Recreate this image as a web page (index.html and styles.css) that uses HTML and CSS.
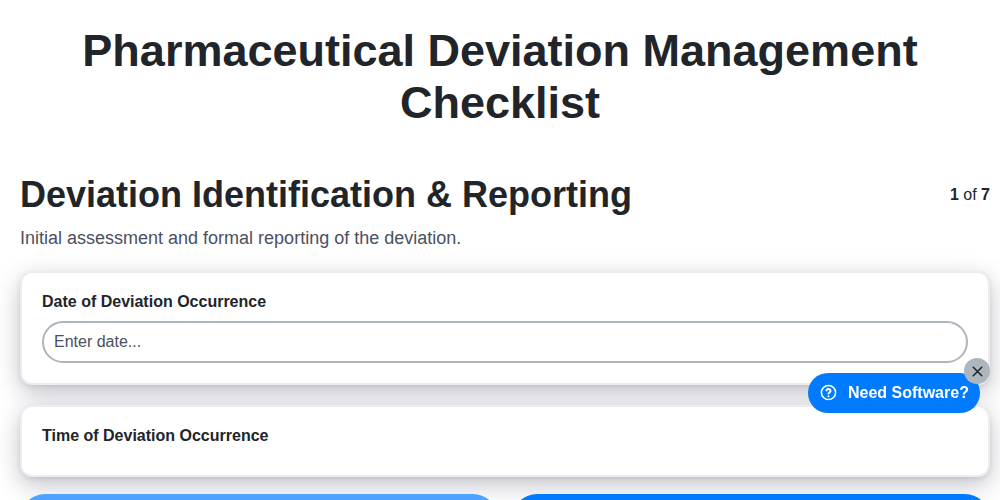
FILE: index.html
```html
<!DOCTYPE html>
<html lang="en">
<head>
<meta charset="utf-8">
<title>Pharmaceutical Deviation Management Checklist</title>
<link rel="stylesheet" href="styles.css">
</head>
<body>
<main class="page">
  <h1 class="title">Pharmaceutical Deviation Management Checklist</h1>
  <header class="section-head">
    <div>
      <h2 class="section-title">Deviation Identification &amp; Reporting</h2>
      <p class="section-sub">Initial assessment and formal reporting of the deviation.</p>
    </div>
    <div class="counter"><strong>1</strong> of <strong>7</strong></div>
  </header>
  <section class="card">
    <label class="label" for="d">Date of Deviation Occurrence</label>
    <input class="field" id="d" type="text" placeholder="Enter date...">
  </section>
  <section class="card card-short">
    <label class="label">Time of Deviation Occurrence</label>
  </section>
  <div class="actions">
    <button class="btn btn-light" aria-label="Previous"></button>
    <button class="btn btn-main" aria-label="Next"></button>
  </div>
</main>
<div class="promo">
  <a class="promo-pill">
    <svg class="promo-icon" viewBox="0 0 24 24" width="17" height="17" fill="none" stroke="#fff" stroke-width="2.2" stroke-linecap="round" stroke-linejoin="round"><circle cx="12" cy="12" r="10"/><path stroke-width="2.8" d="M9.1 9a3 3 0 0 1 5.8 1c0 1.6-2.9 2.4-2.9 3.4"/><path stroke-width="2.8" d="M12 17.2h.01"/></svg>
    <span>Need Software?</span>
  </a>
  <button class="promo-close" aria-label="Close">
    <svg viewBox="0 0 24 24" width="17" height="17" fill="none" stroke="#212529" stroke-width="2.2" stroke-linecap="round"><path d="M6 6l12 12M18 6L6 18"/></svg>
  </button>
</div>
</body>
</html>
```
FILE: styles.css
```css
* { box-sizing: border-box; }
html, body { margin: 0; height: 100%; overflow: hidden; }
body { background: #fff; color: #212529; font-family: "Liberation Sans", Arial, sans-serif; }
.page { padding: 25px 10px 0 20px; }
.title { margin: 0 0 44px; padding-right: 10px; font-size: 45px; line-height: 52px; font-weight: 700; text-align: center; }
.section-head { display: flex; justify-content: space-between; align-items: flex-start; margin-bottom: 22px; }
.section-title { margin: 0 0 11px; font-size: 36px; line-height: 43px; font-weight: 700; }
.section-sub { margin: 0; font-size: 18px; line-height: 22px; color: #4a5060; }
.counter { font-size: 16px; line-height: 19px; margin-top: 12px; }
.card { background: #fff; border: 2px solid #ececf1; border-radius: 12px; padding: 19px 20px 20px; margin-bottom: 20px; box-shadow: 0 8px 24px rgba(40,40,70,.28), 0 2px 4px rgba(0,0,0,.08); height: 114px; }
.card-short { height: 72px; margin-bottom: 17px; }
.label { display: block; font-size: 16px; line-height: 19px; font-weight: 700; margin-bottom: 10px; }
.field { display: block; width: 100%; height: 42px; border: 2px solid #adb5bd; border-radius: 21px; padding: 0 10px; font: 16px "Liberation Sans", Arial, sans-serif; color: #212529; background: #fff; outline: none; }
.field::placeholder { color: #4a5060; opacity: 1; }
.actions { display: flex; gap: 14px; }
.btn { flex: 1; height: 50px; border: 0; border-radius: 25px; }
.btn-light { background: #4da3ff; }
.btn-main { background: #007bff; }
.promo { position: fixed; left: 808px; top: 358px; width: 182px; height: 55px; }
.promo-pill { position: absolute; left: 0; top: 15px; width: 172px; height: 40px; display: flex; align-items: center; gap: 11px; padding-left: 12px; border-radius: 20px; background: #007bff; color: #fff; font-size: 16px; font-weight: 700; }
.promo-icon { margin-top: -1px; }
.promo-close { position: absolute; right: 0; top: 0; width: 26px; height: 26px; padding: 0; border: 0; border-radius: 50%; background: #adb5bd; display: flex; align-items: center; justify-content: center; }
```
